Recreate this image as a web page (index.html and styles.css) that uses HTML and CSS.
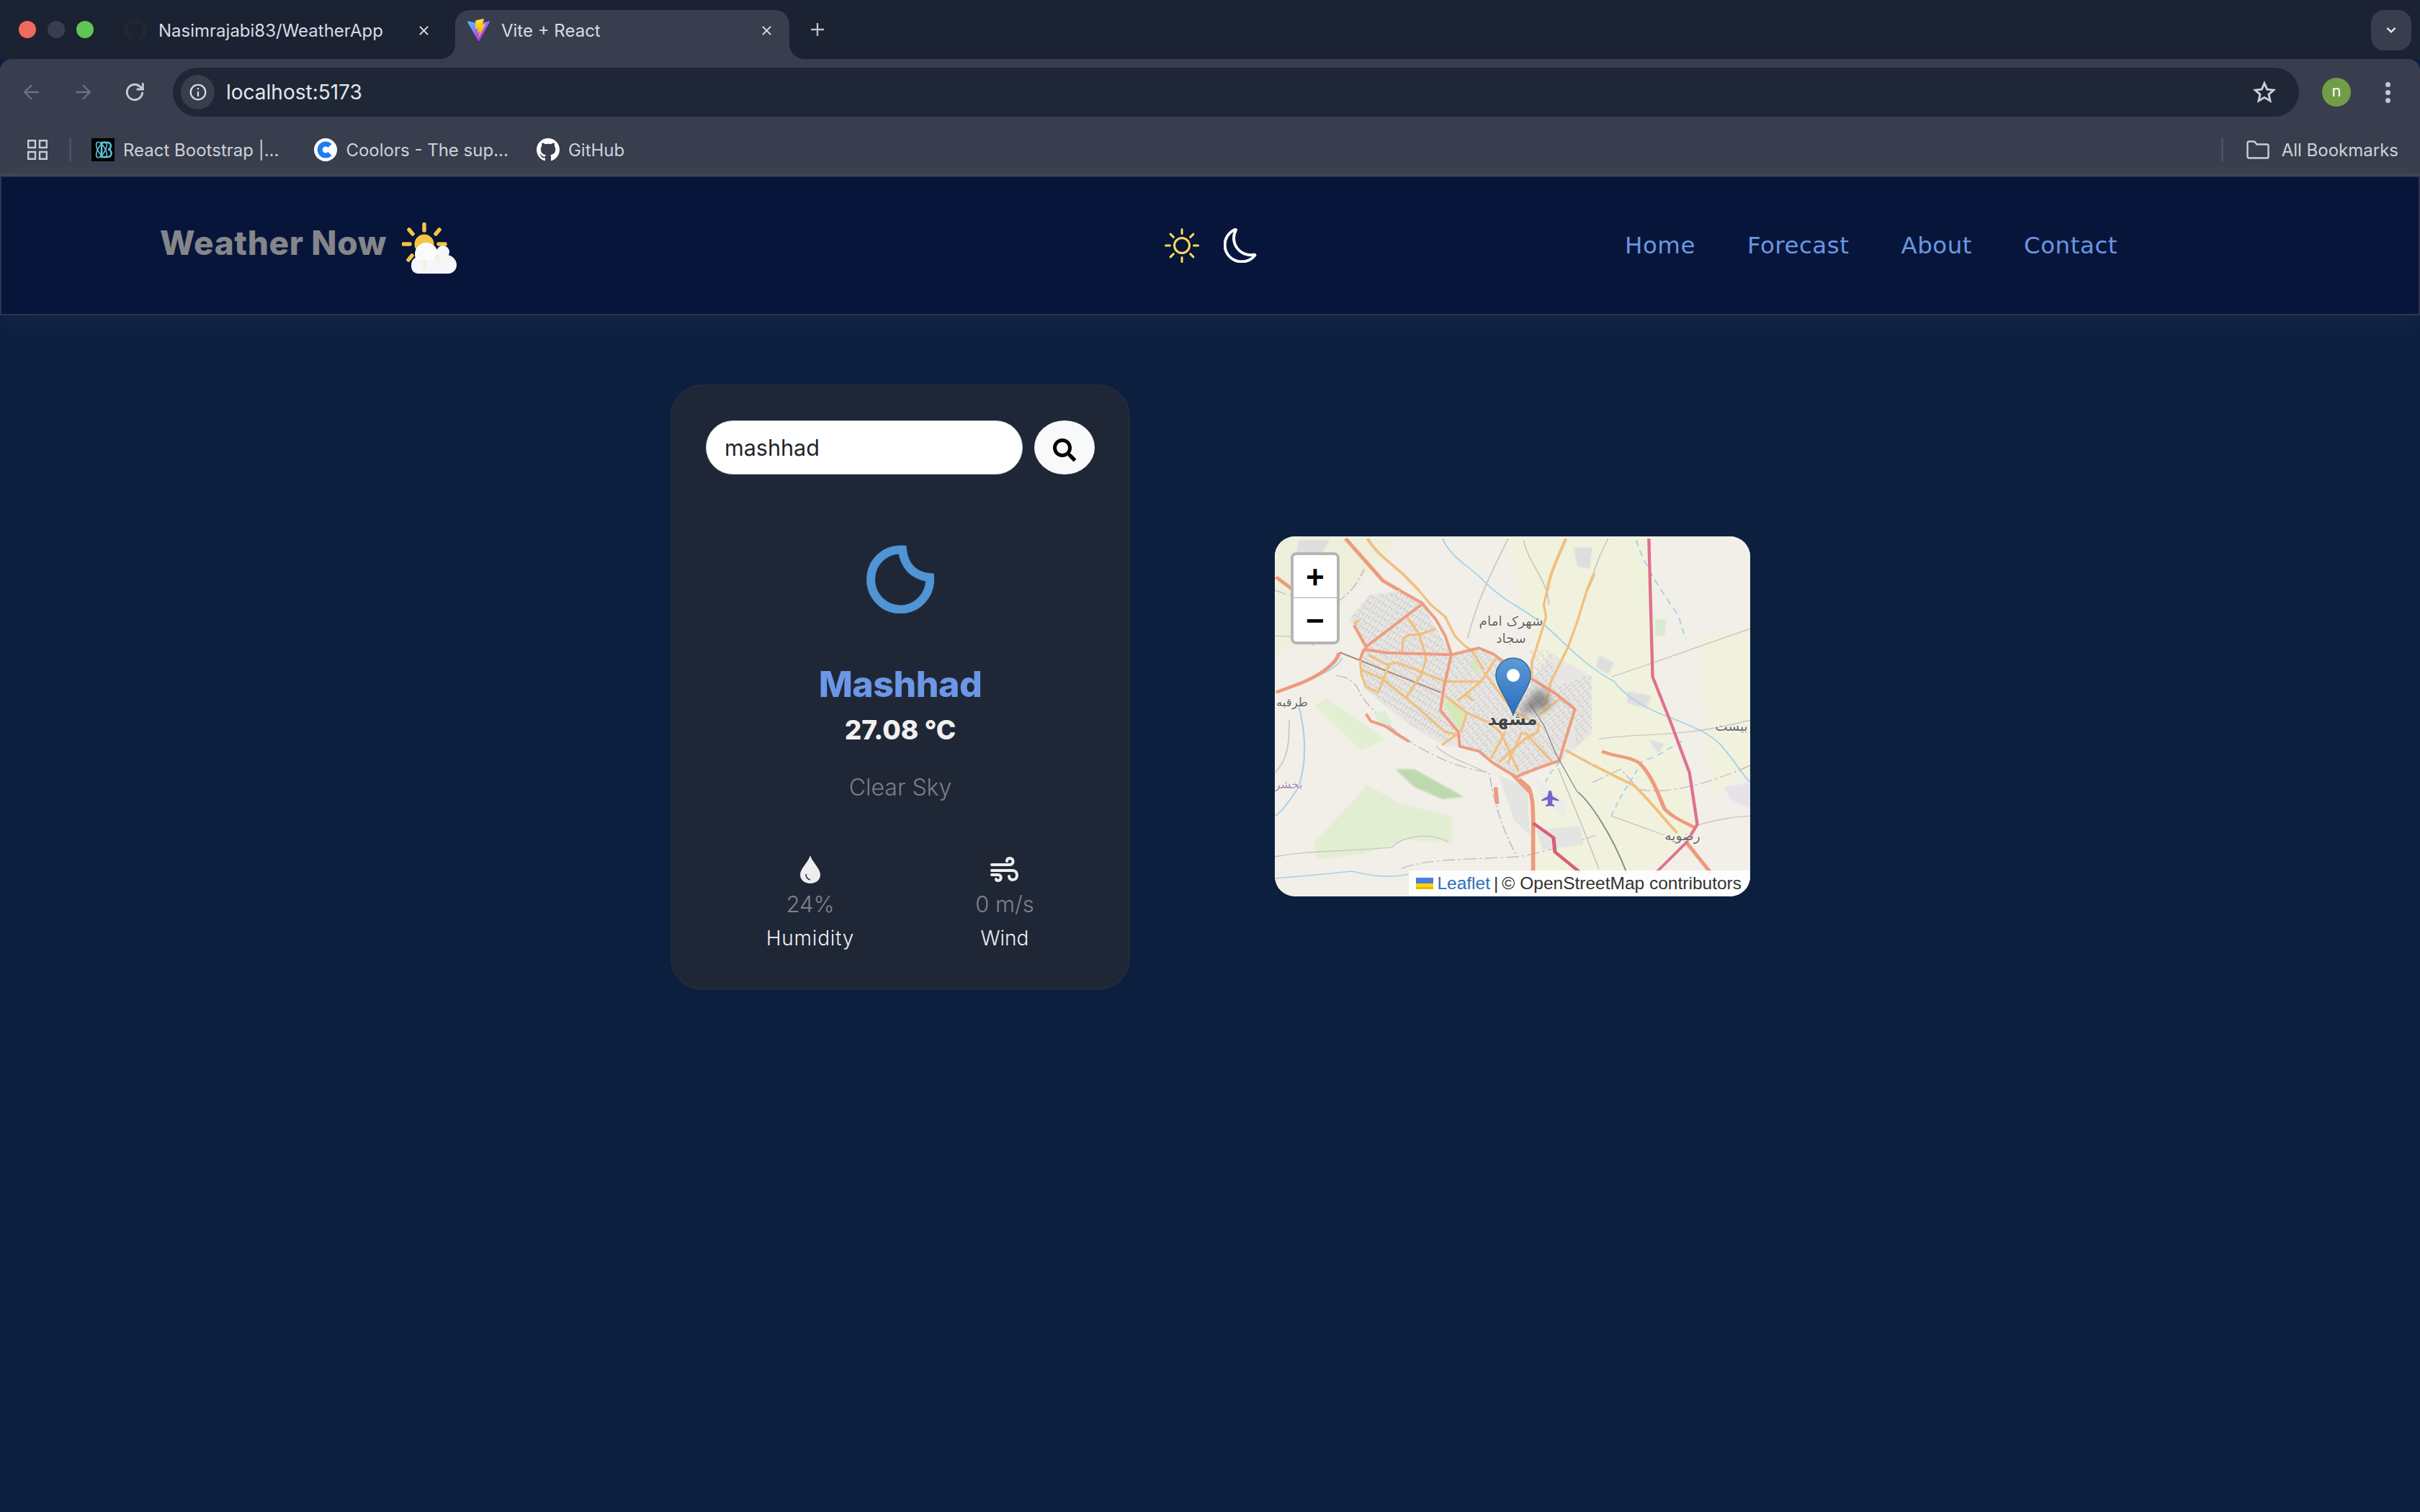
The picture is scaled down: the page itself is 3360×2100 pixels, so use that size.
FILE: index.html
```html
<!DOCTYPE html>
<html lang="en">
<head>
  <meta charset="UTF-8" />
  <meta name="viewport" content="width=device-width, initial-scale=1" />
  <title>Vite + React</title>
  <link rel="stylesheet" href="styles.css">
</head>
<body>
  <!-- browser chrome -->
  <div class="tabstrip">
    <div class="lights">
      <span class="light red"></span>
      <span class="light grey"></span>
      <span class="light green"></span>
    </div>
    <div class="tab">
      <svg class="tab-icon" viewBox="0 0 16 16"><path fill="#23282f" d="M8 0C3.58 0 0 3.58 0 8c0 3.54 2.29 6.53 5.47 7.59.4.07.55-.17.55-.38 0-.19-.01-.82-.01-1.49-2.01.37-2.53-.49-2.69-.94-.09-.23-.48-.94-.82-1.13-.28-.15-.68-.52-.01-.53.63-.01 1.08.58 1.23.82.72 1.21 1.87.87 2.33.66.07-.52.28-.87.51-1.07-1.78-.2-3.64-.89-3.64-3.95 0-.87.31-1.59.82-2.15-.08-.2-.36-1.02.08-2.12 0 0 .67-.21 2.2.82.64-.18 1.32-.27 2-.27.68 0 1.36.09 2 .27 1.53-1.04 2.2-.82 2.2-.82.44 1.1.16 1.92.08 2.12.51.56.82 1.27.82 2.15 0 3.07-1.87 3.75-3.65 3.95.29.25.54.73.54 1.48 0 1.07-.01 1.93-.01 2.2 0 .21.15.46.55.38A8.013 8.013 0 0016 8c0-4.42-3.58-8-8-8z"/></svg>
      <span class="tab-title">Nasimrajabi83/WeatherApp</span>
      <svg class="tab-close" viewBox="0 0 16 16"><path d="M2 2L14 14M14 2L2 14"/></svg>
    </div>
    <div class="tab active">
      <svg class="tab-icon" viewBox="0 0 410 404">
        <defs>
          <linearGradient id="viteA" x1="6" y1="33" x2="235" y2="344" gradientUnits="userSpaceOnUse"><stop offset="0" stop-color="#41d1ff"/><stop offset="1" stop-color="#bd34fe"/></linearGradient>
          <linearGradient id="viteB" x1="194" y1="8" x2="236" y2="292" gradientUnits="userSpaceOnUse"><stop offset="0" stop-color="#ffea83"/><stop offset="0.08" stop-color="#ffdd35"/><stop offset="1" stop-color="#ffa800"/></linearGradient>
        </defs>
        <path fill="url(#viteA)" d="M399.641 59.525L215.643 388.545c-3.799 6.793-13.559 6.833-17.415.073L10.582 59.556c-4.201-7.367 2.1-16.29 10.447-14.797l184.195 32.923c1.175.21 2.378.208 3.553-.006l180.343-32.87c8.32-1.516 14.65 7.337 10.521 14.719z"/>
        <path fill="url(#viteB)" d="M292.965 1.574L156.801 28.255c-2.238.439-3.895 2.335-4.03 4.611l-8.376 141.464c-.197 3.332 2.863 5.918 6.115 5.168l37.91-8.749c3.547-.818 6.752 2.306 6.023 5.873l-11.263 55.153c-.758 3.712 2.727 6.886 6.352 5.785l23.415-7.114c3.63-1.102 7.118 2.081 6.35 5.796l-17.899 86.633c-1.12 5.419 6.088 8.374 9.094 3.728l2.008-3.103 110.954-221.428c1.858-3.707-1.346-7.935-5.418-7.15l-39.022 7.532c-3.667.707-6.787-2.708-5.752-6.296l25.469-88.291c1.036-3.594-2.095-7.012-5.766-6.293z"/>
      </svg>
      <span class="tab-title">Vite + React</span>
      <svg class="tab-close" viewBox="0 0 16 16"><path d="M2 2L14 14M14 2L2 14"/></svg>
    </div>
    <svg class="new-tab" viewBox="0 0 20 20"><path d="M10 1V19M1 10H19"/></svg>
    <div class="tab-search">
      <svg viewBox="0 0 20 12"><path d="M3 2L10 9L17 2"/></svg>
    </div>
  </div>

  <div class="toolbar">
    <div class="toolbar-row">
      <svg class="tool-icon arrow dim" viewBox="0 0 24 24"><path d="M21 12H4M12 3L3 12L12 21"/></svg>
      <svg class="tool-icon arrow dim fwd" viewBox="0 0 24 24"><path d="M3 12H20M12 3L21 12L12 21"/></svg>
      <svg class="tool-icon reload" viewBox="0 0 24 24"><path d="M20 12a8 8 0 1 1-2.5-5.8L20 8.6M20.5 2.5V9H14"/></svg>
      <div class="address">
        <span class="site-info">
          <svg viewBox="0 0 24 24"><circle cx="12" cy="12" r="9.5"/><path d="M12 11V17.5M12 6.5V8.5"/></svg>
        </span>
        <span class="url">localhost:5173</span>
        <svg class="star" viewBox="0 0 24 24"><path d="M12 2.8L14.8 9.1L21.6 9.8L16.5 14.3L18 21L12 17.5L6 21L7.5 14.3L2.4 9.8L9.2 9.1Z"/></svg>
      </div>
      <span class="avatar">n</span>
      <div class="dots"><span></span><span></span><span></span></div>
    </div>
    <div class="bookmarks">
      <svg class="apps" viewBox="0 0 28 28"><path d="M1.2 1.2H11V11H1.2ZM17 1.2H26.8V11H17ZM1.2 17H11V26.8H1.2ZM17 17H26.8V26.8H17Z"/></svg>
      <span class="bm-sep"></span>
      <div class="bookmark first">
        <svg viewBox="0 0 32 32">
          <rect width="32" height="32" fill="#000"/>
          <g fill="none" stroke="#5ec4dc" stroke-width="1.6">
            <ellipse cx="14" cy="16" rx="12" ry="5" transform="rotate(60 14 16)"/>
            <ellipse cx="14" cy="16" rx="12" ry="5" transform="rotate(-60 14 16)"/>
            <path stroke-width="2.6" d="M14 6H23C28 6 28 15 23 15.500C29 16 29 26 23 26H14Z"/>
          </g>
        </svg>
        <span>React Bootstrap |...</span>
      </div>
      <div class="bookmark second">
        <svg viewBox="0 0 32 32">
          <circle cx="16" cy="16" r="16" fill="#fff"/>
          <path d="M22 10.500A8 8 0 1 0 22 21.500" fill="none" stroke="#1f7cf2" stroke-width="7"/>
        </svg>
        <span>Coolors - The sup...</span>
      </div>
      <div class="bookmark third">
        <svg viewBox="0 0 16 16"><path fill="#fff" d="M8 0C3.58 0 0 3.58 0 8c0 3.54 2.29 6.53 5.47 7.59.4.07.55-.17.55-.38 0-.19-.01-.82-.01-1.49-2.01.37-2.53-.49-2.69-.94-.09-.23-.48-.94-.82-1.13-.28-.15-.68-.52-.01-.53.63-.01 1.08.58 1.23.82.72 1.21 1.87.87 2.33.66.07-.52.28-.87.51-1.07-1.78-.2-3.64-.89-3.64-3.95 0-.87.31-1.59.82-2.15-.08-.2-.36-1.02.08-2.12 0 0 .67-.21 2.2.82.64-.18 1.32-.27 2-.27.68 0 1.36.09 2 .27 1.53-1.04 2.2-.82 2.2-.82.44 1.1.16 1.92.08 2.12.51.56.82 1.27.82 2.15 0 3.07-1.87 3.75-3.65 3.95.29.25.54.73.54 1.48 0 1.07-.01 1.93-.01 2.2 0 .21.15.46.55.38A8.013 8.013 0 0016 8c0-4.42-3.58-8-8-8z"/></svg>
        <span>GitHub</span>
      </div>
      <span class="bm-sep right"></span>
      <div class="bookmark all">
        <svg class="folder" viewBox="0 0 32 26"><path d="M1.500 3.500a2 2 0 0 1 2-2H11L14.500 5.500H28.500a2 2 0 0 1 2 2V22.500a2 2 0 0 1-2 2H3.500a2 2 0 0 1-2-2Z"/></svg>
        <span>All Bookmarks</span>
      </div>
    </div>
  </div>

  <!-- app navbar -->
  <header class="navbar">
    <div class="brand">
      <span class="brand-name">Weather Now</span>
      <svg class="brand-icon" viewBox="0 0 76 71">
        <g stroke="#f5c542" stroke-width="5.500" stroke-linecap="round">
          <path d="M31 2.500V11M10 10L15 16M52 10L47 16M2 30H11M51 30H60M9 52L14 46"/>
        </g>
        <circle cx="31" cy="30" r="13.500" fill="#f5c542"/>
        <g fill="#f4f6f9">
          <rect x="13" y="47" width="63" height="24" rx="12"/>
          <circle cx="57" cy="41" r="9"/>
          <circle cx="62" cy="58" r="13"/>
        </g>
        <circle cx="34" cy="44" r="16" fill="#fbfbfb"/>
        <rect x="13" y="52" width="40" height="19" rx="9.500" fill="#f4f6f9"/>
        <path d="M31 54V62M48 49L52 54" stroke="#fbeee0" stroke-width="5" stroke-linecap="round"/>
      </svg>
    </div>
    <div class="theme-toggle">
      <svg viewBox="0 0 16 16"><path fill="#ffd95a" d="M8 11a3 3 0 1 1 0-6 3 3 0 0 1 0 6zm0 1a4 4 0 1 0 0-8 4 4 0 0 0 0 8zM8 0a.5.5 0 0 1 .5.5v2a.5.5 0 0 1-1 0v-2A.5.5 0 0 1 8 0zm0 13a.5.5 0 0 1 .5.5v2a.5.5 0 0 1-1 0v-2A.5.5 0 0 1 8 13zm8-5a.5.5 0 0 1-.5.5h-2a.5.5 0 0 1 0-1h2a.5.5 0 0 1 .5.5zM3 8a.5.5 0 0 1-.5.5h-2a.5.5 0 0 1 0-1h2A.5.5 0 0 1 3 8zm10.657-5.657a.5.5 0 0 1 0 .707l-1.414 1.415a.5.5 0 1 1-.707-.708l1.414-1.414a.5.5 0 0 1 .707 0zm-9.193 9.193a.5.5 0 0 1 0 .707L3.05 13.657a.5.5 0 0 1-.707-.707l1.414-1.414a.5.5 0 0 1 .707 0zm9.193 2.121a.5.5 0 0 1-.707 0l-1.414-1.414a.5.5 0 0 1 .707-.707l1.414 1.414a.5.5 0 0 1 0 .707zM4.464 4.465a.5.5 0 0 1-.707 0L2.343 3.05a.5.5 0 1 1 .707-.707l1.414 1.414a.5.5 0 0 1 0 .708z"/></svg>
      <svg viewBox="0 0 16 16"><path fill="#fff" stroke="#fff" stroke-width="0.3" d="M6 .278a.768.768 0 0 1 .08.858 7.208 7.208 0 0 0-.878 3.46c0 4.021 3.278 7.277 7.318 7.277.527 0 1.04-.055 1.533-.16a.787.787 0 0 1 .81.316.733.733 0 0 1-.031.893A8.349 8.349 0 0 1 8.344 16C3.734 16 0 12.286 0 7.71 0 4.266 2.114 1.312 5.124.06A.752.752 0 0 1 6 .278zM4.858 1.311A7.269 7.269 0 0 0 1.025 7.71c0 4.02 3.279 7.276 7.319 7.276a7.316 7.316 0 0 0 5.205-2.162c-.337.042-.68.063-1.029.063-4.61 0-8.343-3.714-8.343-8.29 0-1.167.242-2.278.681-3.286z"/></svg>
    </div>
    <nav class="nav-links">
      <a>Home</a>
      <a>Forecast</a>
      <a>About</a>
      <a>Contact</a>
    </nav>
  </header>

  <main class="content">
    <section class="weather-card">
      <div class="search-row">
        <input class="search-input" type="text" value="mashhad" />
        <button class="search-btn">
          <svg viewBox="0 0 512 512"><path d="M505 442.7L405.3 343c-4.5-4.5-10.6-7-17-7H372c27.6-35.3 44-79.7 44-128C416 93.1 322.9 0 208 0S0 93.1 0 208s93.1 208 208 208c48.3 0 92.7-16.4 128-44v16.3c0 6.4 2.5 12.5 7 17l99.7 99.700c9.4 9.4 24.6 9.4 33.9 0l28.3-28.3c9.4-9.4 9.4-24.6.1-34zM208 336c-70.7 0-128-57.2-128-128 0-70.7 57.2-128 128-128 70.7 0 128 57.2 128 128 0 70.7-57.2 128-128 128z"/></svg>
        </button>
      </div>
      <svg class="weather-icon" viewBox="0 0 94 95"><path d="M50 6.500A41 41.500 0 1 0 88 45C66 43 52 29 50 6.500Z"/></svg>
      <h2 class="city">Mashhad</h2>
      <div class="temp">27.08 °C</div>
      <div class="desc">Clear Sky</div>
      <div class="stats">
        <div class="stat">
          <svg class="stat-icon" viewBox="0 0 28 39">
            <path fill="#eee" d="M14 0C11 10 0 18 0 27C0 34 6 39 14 39C22 39 28 34 28 27C28 18 17 10 14 0Z"/>
            <path fill="none" stroke="#1f2737" stroke-width="1.600" d="M8 26C8 30 10 33 14 34"/>
          </svg>
          <div class="stat-value">24%</div>
          <div class="stat-label humidity">Humidity</div>
        </div>
        <div class="stat">
          <svg class="stat-icon" viewBox="0 0 40 39">
            <g fill="none" stroke="#eee" stroke-width="4" stroke-linecap="round">
              <path d="M2 13H27C33 13 33 4 27 4C24 4 23 6 23 8"/>
              <path d="M2 21H31C39 21 39 34 31 34C28 34 26 32 26 29"/>
              <path d="M2 27H11C16 27 16 35 11 35C9 35 8 34 8 33"/>
            </g>
          </svg>
          <div class="stat-value">0 m/s</div>
          <div class="stat-label">Wind</div>
        </div>
      </div>
    </section>

    <section class="map">
      <svg class="map-tiles" viewBox="0 0 660 500">
        <defs>
          <pattern id="gridA" width="30" height="26" patternUnits="userSpaceOnUse" patternTransform="rotate(32)">
            <path d="M0 0H30M0 0V26M15 0V13" stroke="#b4b4b4" stroke-width="2.400" fill="none"/>
          </pattern>
          <pattern id="gridB" width="26" height="30" patternUnits="userSpaceOnUse" patternTransform="rotate(-38)">
            <path d="M0 0H26M0 0V30M0 15H13" stroke="#b8b8b8" stroke-width="2.400" fill="none"/>
          </pattern>
          <filter id="soft" x="-5%" y="-5%" width="110%" height="110%"><feGaussianBlur stdDeviation="0.700"/></filter>
          <filter id="patch" x="-10%" y="-10%" width="120%" height="120%"><feGaussianBlur stdDeviation="3"/></filter>
          <filter id="softer" x="-30%" y="-30%" width="160%" height="160%"><feGaussianBlur stdDeviation="6"/></filter>
          <linearGradient id="pin" x1="0" y1="0" x2="0" y2="1"><stop offset="0" stop-color="#5d9bd6"/><stop offset="1" stop-color="#2a6cc0"/></linearGradient>
        </defs>
        <rect width="660" height="500" fill="#f2efe9"/>

        <!-- green and farmland -->
        <g filter="url(#patch)" transform="scale(0.43421 0.33333) translate(-24 -15)">
          <path fill="#f1f2de" d="M760 20H1220L1240 600L1380 1230L1120 1510H860L840 1100L1000 840L880 600Z"/>
          <path fill="#f1f2de" d="M1380 440L1544 400V1000L1420 1100Z"/>
          <path fill="#eef0dc" d="M24 20H420L240 300L24 520Z"/>
          <path fill="#e2eed2" d="M150 1290L320 1050L430 1130L590 1180L590 1290L440 1280L300 1340L160 1360Z"/>
          <path fill="#bfd9ae" d="M410 985L470 985L630 1100L560 1110L470 1060Z"/>
          <path fill="#e3efd2" d="M150 720L190 690L380 860L300 910Z"/>
          <path fill="#e6e2ea" d="M1460 1060L1544 1040V1150L1480 1110Z"/>
          <path fill="#d8ead0" d="M1240 360L1275 360L1270 430L1240 430Z"/>
          <path fill="#dedede" d="M100 30L200 30L170 100L90 110Z"/>
          <path fill="#dedede" d="M980 60L1040 60L1030 150L990 140Z"/>
          <path fill="#dedede" d="M1150 660L1230 680L1210 730L1150 710Z"/>
          <path fill="#dedede" d="M1060 510L1110 540L1090 590L1050 560Z"/>
          <path fill="#dedede" d="M1220 860L1270 880L1250 920Z"/>
        </g>

        <!-- roads around the city -->
        <g filter="url(#soft)" transform="scale(0.43421 0.33333) translate(-24 -15)">
          <g fill="none" stroke="#a9d3e6" stroke-width="5">
            <path d="M560 24C590 110 640 130 700 210C760 290 830 320 900 400C960 470 1020 560 1110 620C1140 680 1220 740 1290 770C1340 800 1420 830 1460 900C1500 960 1520 1010 1544 1040"/>
            <path d="M100 720C120 820 130 940 100 1060C70 1120 40 1170 24 1180"/>
            <path d="M24 1440C120 1430 200 1420 270 1410C330 1430 400 1440 460 1420"/>
            <path d="M120 620C170 590 220 570 240 520"/>
            <path stroke-dasharray="26 18" d="M1180 30C1200 120 1240 200 1290 300C1330 360 1320 400 1340 440"/>
            <path stroke-dasharray="22 16" d="M1100 1180C1130 1090 1170 1020 1200 950C1260 930 1300 880 1340 860"/>
            <path stroke-dasharray="22 16" d="M890 1040C900 1000 920 980 950 930"/>
          </g>
          <g fill="none" stroke="#c9c6c2" stroke-width="4">
            <path d="M770 24C740 110 680 240 640 440M820 30C830 120 900 200 900 300M1090 24C1060 100 1040 160 1040 200"/>
            <path d="M24 1000C70 940 70 860 70 780M24 1350C140 1320 260 1330 400 1310C420 1270 520 1240 580 1290"/>
            <path d="M1100 600C1200 560 1340 490 1544 400M1060 860C1180 830 1320 860 1544 780"/>
            <path d="M1100 1180L1270 1260M1370 1220C1420 1200 1500 1180 1544 1180M540 890C590 950 650 960 700 1000"/>
            <path d="M930 980L1000 1200L1060 1400M150 470C110 430 60 430 24 430"/>
          </g>
          <g fill="none" stroke="#c9b7cc" stroke-width="4" stroke-dasharray="40 10 8 10">
            <path d="M24 240C70 260 130 290 220 290C260 260 290 210 310 150"/>
            <path d="M220 595C270 600 290 640 300 680C360 780 450 880 540 930C610 980 680 990 710 1000C720 1100 750 1240 800 1350"/>
            <path d="M430 1400C490 1360 650 1360 800 1350C860 1340 960 1300 1050 1260"/>
            <path d="M1040 1040L1130 985L1190 1070C1280 1090 1400 1050 1544 970"/>
          </g>
          <path fill="#e4e4e2" d="M740 1010L830 1060L840 1260L790 1200Z"/>
          <path fill="#e4e4e2" d="M860 1240L1000 1220L1010 1300L880 1320Z"/>
          <path fill="#ececea" d="M850 1010L960 1130L950 1190L880 1110Z"/>
          <path fill="none" stroke="#8a8a8a" stroke-width="4.500" d="M993 1080C1030 1120 1100 1250 1150 1420"/>
          <g fill="none" stroke="#f1c07e" stroke-width="10" stroke-linejoin="round">
            <path d="M320 24C350 90 400 130 440 180L485 240"/>
            <path d="M955 24C930 100 900 180 896 240"/>
            <path d="M1045 170L1022 240"/>
            <path d="M1039 966C1090 1000 1150 1040 1170 1050C1220 1110 1260 1180 1310 1250"/>
          </g>
          <g fill="none" stroke="#ee9a7d" stroke-width="13" stroke-linejoin="round">
            <path d="M250 24L370 200L423 240"/>
            <path d="M28 185L80 235"/>
            <path d="M230 500C220 550 160 600 100 630L28 665"/>
            <path d="M800 1020L835 1060C850 1100 850 1160 850 1210V1420"/>
            <path d="M730 1060L735 1130"/>
            <path d="M1070 910C1110 935 1160 930 1190 960C1230 1010 1250 1090 1270 1150C1300 1190 1340 1210 1370 1230"/>
            <path d="M1340 1290L1420 1420"/>
          </g>
          <path fill="none" stroke="#d95f78" stroke-width="12" d="M850 1210L915 1270L920 1330L1000 1415"/>
          <path fill="none" stroke="#e0708c" stroke-width="10" stroke-linejoin="round" d="M1220 24L1232 600L1290 790L1350 1000L1375 1215L1340 1290L1240 1420"/>
          <path fill="#7a63c8" d="M900 1075H908L912 1098L932 1112V1118L912 1112L911 1128L918 1136V1141L904 1138L890 1141V1136L897 1128L896 1112L877 1118V1112L896 1098Z"/>
        </g>

        <!-- city, drawn at 3x -->
        <g filter="url(#soft)" transform="translate(90 75) scale(0.33333)">
          <path fill="#e7e6e3" d="M40 120L120 20L250 0L340 50L465 265L580 240L800 370L880 260L1050 360V600L980 660L915 710L740 790L580 670L500 650L440 650L300 570L100 410L85 290L100 240Z"/>
          <path fill="url(#gridA)" d="M50 110L125 20L250 5L340 50L460 260L420 500L495 590L440 635L300 560L100 400L85 290L100 240Z"/>
          <path fill="url(#gridB)" d="M465 268L580 240L800 370L980 495L935 640L915 710L740 780L580 670L500 650L495 590L420 500Z"/>
          <path fill="url(#gridB)" d="M790 250L880 250L900 400L1050 350V580L985 650L970 500L800 370Z"/>
          <path fill="#d6e8b8" d="M430 470L470 450L525 520L500 580Z"/>
          <path fill="#d6e8b8" d="M540 295L560 285L585 345L570 352Z"/>
          <path fill="#dcefd6" d="M140 510L190 500L220 555L170 565Z"/>
          <path fill="none" stroke="#b08878" stroke-width="6" d="M0 258L420 425"/>
          <g fill="none" stroke="#f0c080" stroke-width="10" stroke-linejoin="round">
            <path d="M330 0L380 60L440 110L480 190L520 230L550 250L600 330"/>
            <path d="M865 0L850 60L860 110L820 240L800 300L800 360"/>
            <path d="M1030 0L990 130L950 240L880 380L860 470L840 480"/>
            <path d="M60 140L80 125"/>
            <path d="M280 110L330 180L355 260L360 290L340 350L275 450"/>
            <path d="M260 255L265 200L290 185L330 185L400 160"/>
            <path d="M85 290L90 350L110 400L160 425L205 315"/>
            <path d="M120 270L200 310L240 300L440 380L590 380L650 285"/>
            <path d="M90 330L180 370L280 450L440 590L490 600L425 645"/>
            <path d="M440 440L530 510L620 550L670 590L745 755"/>
            <path d="M590 380L490 460M520 430L555 460"/>
            <path d="M530 510L505 590"/>
            <path d="M600 340L720 500L830 560L825 590L770 620L665 715"/>
            <path d="M690 590L630 700M760 590L700 720M770 590L885 715"/>
            <path d="M920 450L830 520"/>
            <path d="M940 665L1050 725"/>
          </g>
          <g fill="none" stroke="#ee9c80" stroke-width="12" stroke-linejoin="round">
            <path d="M250 0L340 50L400 120L440 190L465 265"/>
            <path d="M340 60L280 105L110 235L60 145"/>
            <path d="M100 245L200 260L465 268L580 240L640 265L700 310L810 375L900 430L980 495L960 560L935 640L915 710L840 735L750 770L740 780L640 720L580 670L500 650L495 590L420 500L435 400L465 268"/>
            <path d="M100 245L85 290"/>
            <path d="M110 515L130 545L190 565L240 600L290 630"/>
            <path d="M720 770L770 820L790 840"/>
          </g>
          <path fill="none" stroke="#8a8a8a" stroke-width="4" d="M790 470L850 560L900 680L990 840"/>
        </g>

        <!-- labels -->
        <g class="map-labels">
          <text x="328" y="124">شهرک امام</text>
          <text x="328" y="148">سجاد</text>
          <text class="small" x="24" y="236">طرقبه</text>
          <text class="small purple" x="19" y="350">بخشر</text>
          <text x="566" y="422">رضویه</text>
          <text x="634" y="270">بیست</text>
          <text class="city-label" x="330" y="262">مشهد</text>
        </g>

        <!-- marker -->
        <path d="M336 248L362 213C380 212 390 230 375 240Z" fill="#555" opacity="0.6" filter="url(#softer)"/>
        <g transform="translate(306 168)">
          <path fill="url(#pin)" stroke="#2e6c97" stroke-width="1.500" d="M25 1C11.700 1 1 11.700 1 25C1 39 15 55 25 80C35 55 49 39 49 25C49 11.700 38.300 1 25 1Z"/>
          <circle cx="25" cy="25" r="9" fill="#fff"/>
        </g>
      </svg>
      <div class="zoom-ctl">
        <a class="zoom-btn">+</a>
        <a class="zoom-btn">−</a>
      </div>
      <div class="attribution">
        <svg viewBox="0 0 24 16"><rect width="24" height="8" fill="#4c7be1"/><rect y="8" width="24" height="5" fill="#ffd500"/><rect y="13" width="24" height="3" fill="#e0bc00"/></svg>
        <a>Leaflet</a> <span class="attr-sep">|</span> © OpenStreetMap contributors
      </div>
    </section>
  </main>
</body>
</html>
```

FILE: styles.css
```css
* {
  box-sizing: border-box;
}
body {
  margin: 0;
  min-height: 100vh;
  background-color: #0c1f3f;
  font-family: 'Inter', sans-serif;
  overflow: hidden;
}

/* tab strip */
.tabstrip {
  height: 82px;
  padding-top: 14px;
  display: flex;
  background: #1b2232;
  color: #d8dbe3;
}
.lights {
  display: flex;
  gap: 16px;
  padding: 15px 26px 0;
}
.light {
  width: 24px;
  height: 24px;
  border-radius: 50%;
}
.light.red { background: #ef6a5e; }
.light.grey { background: #383e4d; }
.light.green { background: #60c655; }
.tab {
  position: relative;
  width: 464px;
  height: 68px;
  margin-right: 12px;
  padding: 0 24px 12px 16px;
  display: flex;
  align-items: center;
  border-radius: 20px 20px 0 0;
}
.tab.active {
  background: #383e4d;
}
.tab.active::before,
.tab.active::after {
  content: "";
  position: absolute;
  bottom: 0;
  width: 20px;
  height: 20px;
}
.tab.active::before {
  left: -20px;
  background: radial-gradient(circle at 0 0, transparent 19.5px, #383e4d 20px);
}
.tab.active::after {
  right: -20px;
  background: radial-gradient(circle at 100% 0, transparent 19.5px, #383e4d 20px);
}
.tab-icon {
  width: 33px;
  height: 32px;
  flex: none;
}
.tab-title {
  margin-left: 15px;
  font-size: 24px;
  white-space: nowrap;
}
.tab-close {
  width: 15px;
  height: 15px;
  margin-left: auto;
  fill: none;
  stroke: #d8dbe3;
  stroke-width: 2.2;
}
.new-tab {
  width: 20px;
  height: 20px;
  margin: 17px 0 0 17px;
  fill: none;
  stroke: #b9bfcc;
  stroke-width: 2.4;
}
.tab-search {
  width: 56px;
  height: 56px;
  margin-left: auto;
  margin-right: 12px;
  border-radius: 18px;
  background: #383e4d;
  display: flex;
  align-items: center;
  justify-content: center;
}
.tab-search svg {
  width: 16px;
  height: 10px;
  fill: none;
  stroke: #e6e8ee;
  stroke-width: 3;
}

/* toolbar */
.toolbar {
  height: 162px;
  background: #383e4d;
  border-radius: 16px 16px 0 0;
  border-bottom: 2px solid #47474f;
}
.toolbar-row {
  height: 92px;
  padding: 12px 0;
  display: flex;
  align-items: center;
}
.tool-icon {
  width: 26px;
  height: 26px;
  fill: none;
  stroke: #c6cad6;
  stroke-width: 2.2;
}
.tool-icon.dim {
  stroke: #6c7283;
}
.arrow {
  margin-left: 31px;
}
.arrow.fwd {
  margin-left: 45px;
}
.reload {
  width: 32px;
  height: 32px;
  margin-left: 43px;
}
.address {
  width: 2952px;
  height: 68px;
  margin-left: 37px;
  padding: 0 11px;
  display: flex;
  align-items: center;
  border-radius: 34px;
  background: #1f2636;
  color: #e4e6ec;
}
.site-info {
  width: 47px;
  height: 48px;
  border-radius: 50%;
  background: #383e4d;
  display: flex;
  align-items: center;
  justify-content: center;
}
.site-info svg {
  width: 26px;
  height: 26px;
  fill: none;
  stroke: #dfe1e8;
  stroke-width: 2;
}
.url {
  margin-left: 16px;
  font-size: 28px;
}
.star {
  width: 32px;
  height: 32px;
  margin-left: auto;
  margin-right: 21px;
  fill: none;
  stroke: #ccced6;
  stroke-width: 2.200;
}
.avatar {
  width: 40px;
  height: 40px;
  margin-left: 32px;
  border-radius: 50%;
  background: #719d46;
  color: #fff;
  font-size: 22px;
  line-height: 36px;
  text-align: center;
}
.dots {
  margin-left: 48px;
  display: flex;
  flex-direction: column;
  gap: 4px;
}
.dots span {
  width: 7px;
  height: 7px;
  border-radius: 50%;
  background: #c3c8dc;
}

/* bookmarks bar */
.bookmarks {
  height: 68px;
  display: flex;
  align-items: center;
  color: #cfd1d8;
  font-size: 24px;
}
.apps {
  width: 28px;
  height: 28px;
  margin-left: 38px;
  fill: none;
  stroke: #c6cad4;
  stroke-width: 2.400;
}
.bm-sep {
  width: 3px;
  height: 32px;
  margin-left: 30px;
  background: #4c5262;
}
.bm-sep.right {
  margin-left: auto;
}
.bookmark {
  display: flex;
  align-items: center;
  white-space: nowrap;
}
.bookmark svg {
  width: 32px;
  height: 32px;
  margin-right: 12px;
}
.bookmark.first { margin-left: 28px; }
.bookmark.second { margin-left: 49px; }
.bookmark.third { margin-left: 39px; }
.bookmark.all {
  margin-left: 32px;
  margin-right: 30px;
}
.bookmark .folder {
  height: 26px;
  margin-right: 17px;
  fill: none;
  stroke: #ccced6;
  stroke-width: 2.400;
}

/* navbar */
.navbar {
  position: relative;
  height: 194px;
  padding: 0 418px 0 220px;
  display: flex;
  align-items: center;
  background: #07153b;
  border: 2px solid #2e3450;
  box-shadow: 0 6px 50px rgba(255, 255, 255, 0.05);
}
.brand {
  display: flex;
  align-items: center;
}
.brand-name {
  margin-bottom: 8px;
  color: #848689;
  font-size: 46px;
  font-weight: 800;
  letter-spacing: 0.6px;
}
.brand-icon {
  width: 76px;
  height: 71px;
  margin-left: 21px;
  margin-top: 6px;
}
.theme-toggle {
  margin-left: 983px;
  display: flex;
  gap: 34px;
}
.theme-toggle svg {
  width: 48px;
  height: 48px;
}
.nav-links {
  margin-left: auto;
  display: flex;
  gap: 72px;
}
.nav-links a {
  color: #6c96e0;
  font-family: 'DejaVu Sans', sans-serif;
  font-size: 32.5px;
  letter-spacing: 0.5px;
}

/* main content */
.content {
  padding: 96px 0 0 1px;
  display: flex;
  align-items: center;
  justify-content: center;
  gap: 201px;
}
.weather-card {
  width: 638px;
  height: 841px;
  padding: 48px 47px;
  display: flex;
  flex-direction: column;
  align-items: center;
  border: 2px solid #242b39;
  border-radius: 44px;
  background: #1f2737;
  color: #f0f0f0;
}
.search-row {
  width: 100%;
  display: flex;
  gap: 16px;
}
.search-input {
  width: 440px;
  height: 75px;
  padding: 0 25px;
  border: 1px solid #ced4da;
  border-radius: 38px;
  background: #fff;
  color: #212529;
  font-family: 'Inter', sans-serif;
  font-size: 30.5px;
}
.search-btn {
  width: 84px;
  height: 75px;
  padding: 0;
  border: none;
  border-radius: 50%;
  background: #f8f9fa;
  display: flex;
  align-items: center;
  justify-content: center;
}
.search-btn svg {
  width: 32px;
  height: 32px;
  margin-top: 6px;
}
.weather-icon {
  width: 94px;
  height: 95px;
  margin-top: 98px;
  fill: none;
  stroke: #4f94d4;
  stroke-width: 12;
}
.city {
  margin: 68px 0 0;
  color: #6c96e6;
  font-size: 50px;
  font-weight: 800;
  line-height: 60px;
  letter-spacing: -0.5px;
}
.temp {
  margin-top: 10px;
  font-size: 37px;
  font-weight: 800;
  line-height: 48px;
}
.desc {
  margin-top: 36px;
  color: #7b7f85;
  font-size: 32px;
  font-weight: 300;
  line-height: 40px;
}
.stats {
  margin: 74px 0 0 20px;
  display: flex;
  justify-content: center;
  gap: 150px;
}
.stat {
  width: 120px;
  display: flex;
  flex-direction: column;
  align-items: center;
}
.stat-icon {
  height: 39px;
}
.stat-value {
  margin-top: 9px;
  color: #7f8388;
  font-size: 31px;
  font-weight: 300;
  line-height: 40px;
}
.stat-label {
  margin-top: 9px;
  font-size: 28px;
  font-weight: 300;
  line-height: 36px;
}
.stat-label.humidity {
  letter-spacing: 0.8px;
}

/* map */
.map {
  position: relative;
  width: 660px;
  height: 500px;
  margin-top: 81px;
  border-radius: 28px;
  overflow: hidden;
  background: #f2efe9;
}
.map-tiles {
  display: block;
  width: 660px;
  height: 500px;
}
.map-labels text {
  fill: #666;
  font-family: 'DejaVu Sans', sans-serif;
  font-size: 18.5px;
  text-anchor: middle;
  paint-order: stroke;
  stroke: rgba(255, 255, 255, 0.6);
  stroke-width: 2px;
}
.map-labels .small {
  font-size: 16.5px;
}
.map-labels .purple {
  fill: #a78cb8;
}
.map-labels .city-label {
  fill: #444;
  font-size: 24px;
  font-weight: 700;
}
.zoom-ctl {
  position: absolute;
  top: 22px;
  left: 22px;
  width: 68px;
  border: 4px solid #b5b5b3;
  border-radius: 8px;
  overflow: hidden;
  background: #fff;
}
.zoom-btn {
  display: block;
  height: 60px;
  color: #000;
  font-family: 'Liberation Mono', monospace;
  font-size: 44px;
  font-weight: 700;
  line-height: 68px;
  text-align: center;
}
.zoom-btn:first-child {
  border-bottom: 2px solid #ccc;
}
.attribution {
  position: absolute;
  right: 0;
  bottom: 0;
  height: 36px;
  padding: 0 12px 0 10px;
  display: flex;
  align-items: center;
  gap: 5px;
  background: rgba(255, 255, 255, 0.88);
  color: #333;
  font-family: 'Liberation Sans', sans-serif;
  font-size: 24.5px;
  white-space: nowrap;
}
.attribution svg {
  width: 24px;
  height: 16px;
}
.attribution a {
  color: #2a6fb8;
}
.attr-sep {
  margin: 0;
}
```
